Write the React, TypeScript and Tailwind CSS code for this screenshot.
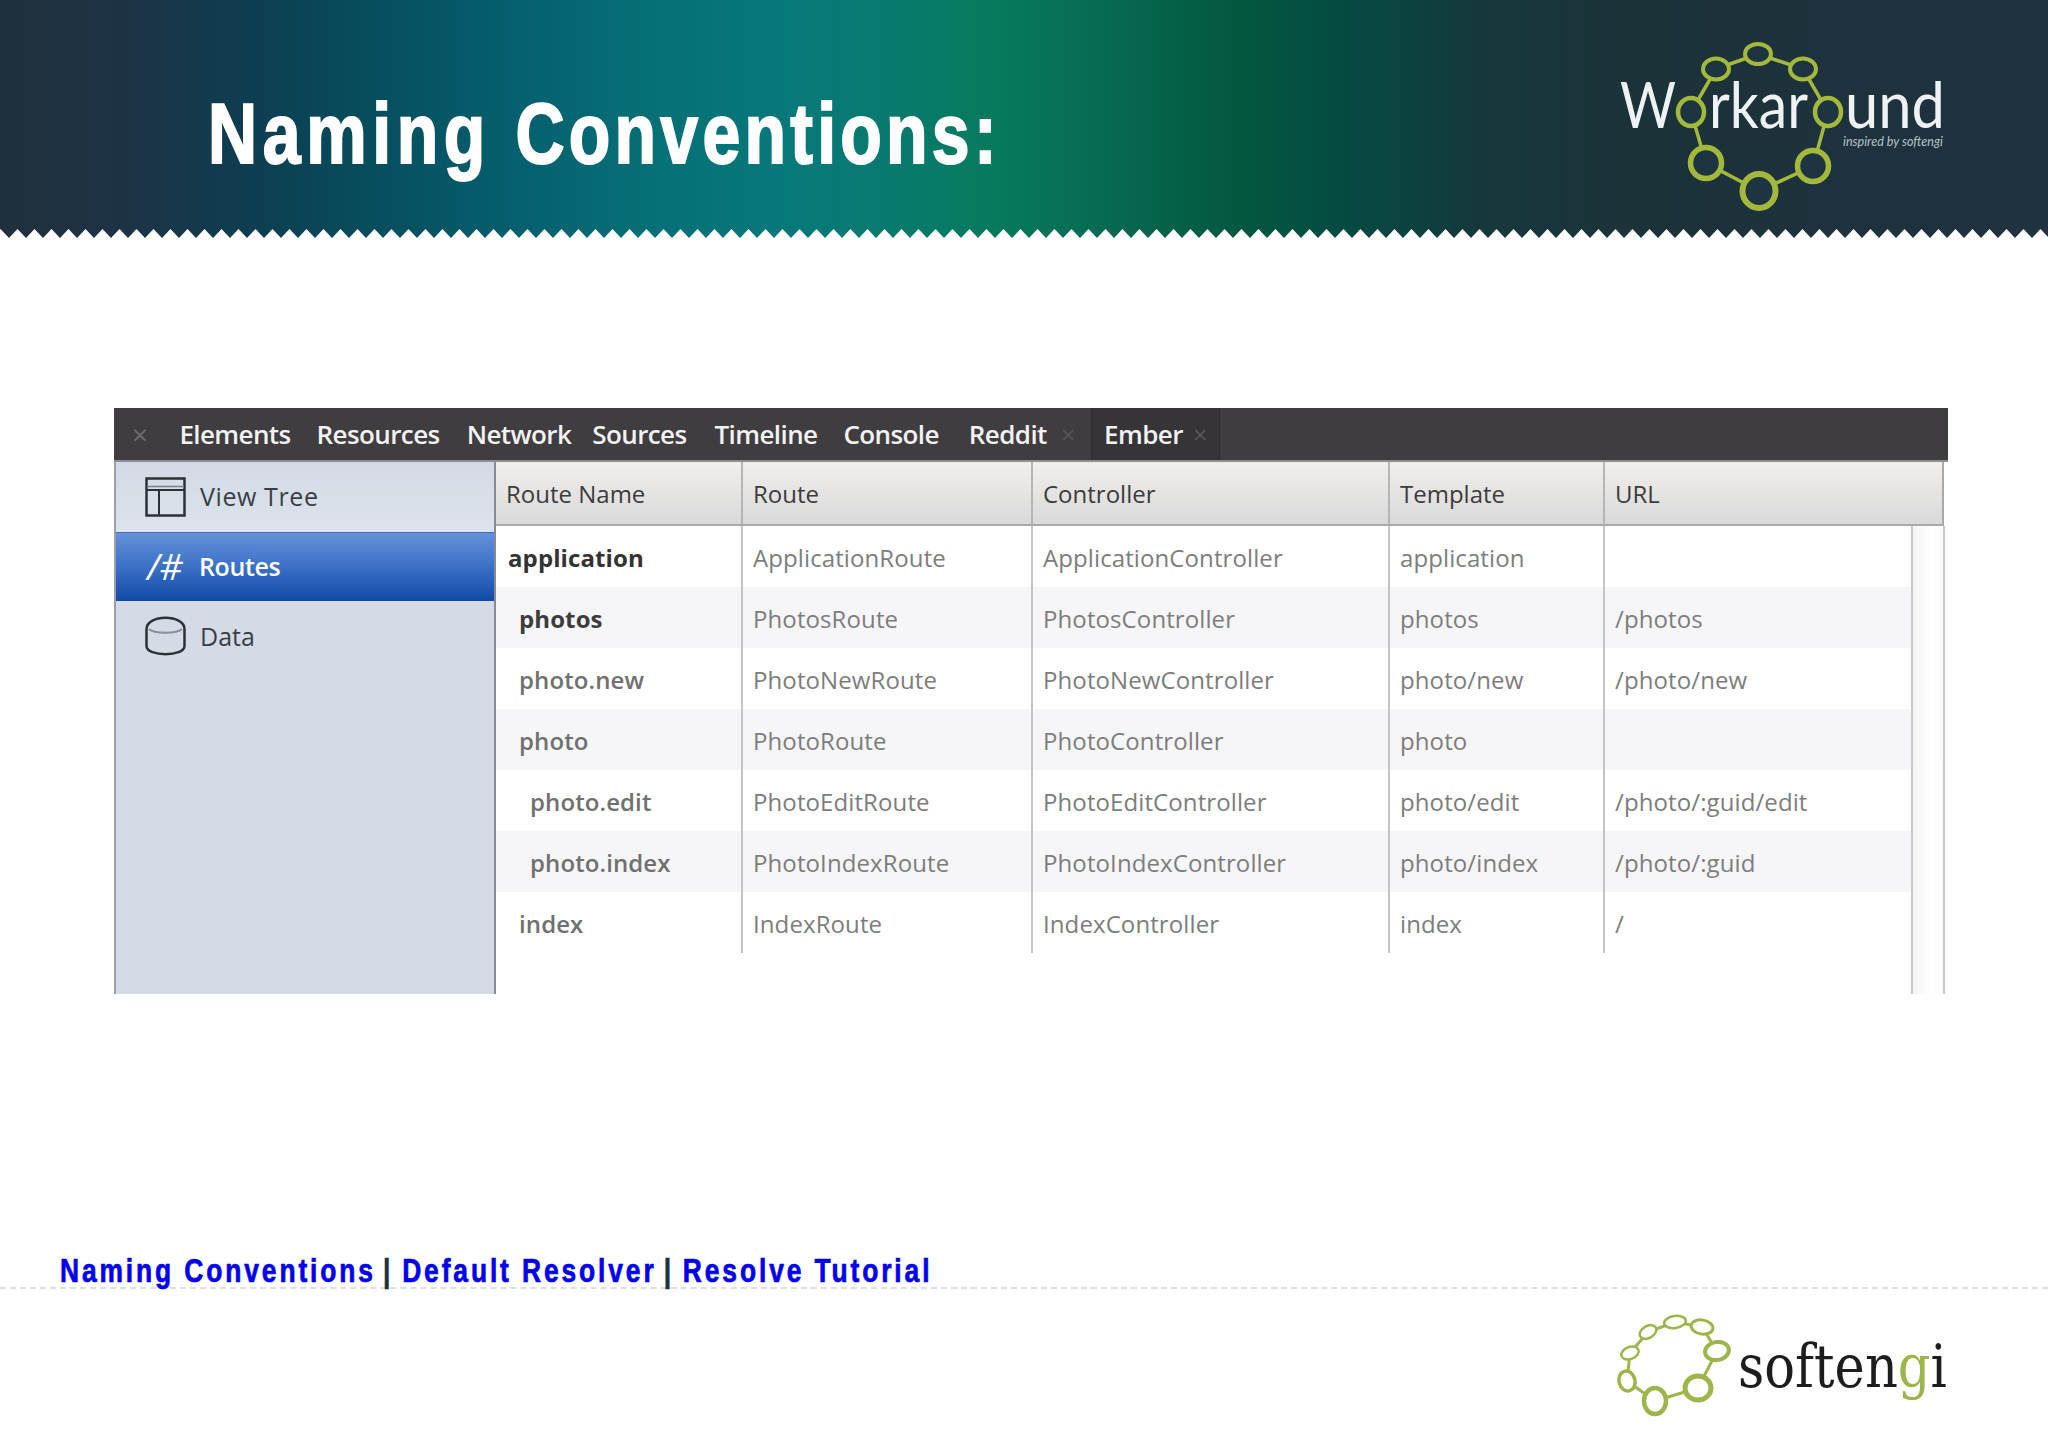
const rows: [string, string, string, string, string, number, string][] = [
  ["application", "ApplicationRoute", "ApplicationController", "application", "", 0, "font-bold text-[#333333]"],
  ["photos", "PhotosRoute", "PhotosController", "photos", "/photos", 1, "font-bold text-[#3d3d3d]"],
  ["photo.new", "PhotoNewRoute", "PhotoNewController", "photo/new", "/photo/new", 1, "font-semibold text-[#707070]"],
  ["photo", "PhotoRoute", "PhotoController", "photo", "", 1, "font-semibold text-[#707070]"],
  ["photo.edit", "PhotoEditRoute", "PhotoEditController", "photo/edit", "/photo/:guid/edit", 2, "font-semibold text-[#707070]"],
  ["photo.index", "PhotoIndexRoute", "PhotoIndexController", "photo/index", "/photo/:guid", 2, "font-semibold text-[#707070]"],
  ["index", "IndexRoute", "IndexController", "index", "/", 1, "font-semibold text-[#707070]"],
];

const tabs: [string, string][] = [
  ["Elements", "ml-[32px]"],
  ["Resources", "ml-[26px]"],
  ["Network", "ml-[27px]"],
  ["Sources", "ml-[21px]"],
  ["Timeline", "ml-[28px]"],
  ["Console", "ml-[26px]"],
  ["Reddit", "ml-[30px]"],
];

const grid = "grid grid-cols-[245px_290px_357px_215px_308px]";

function Teeth() {
  const pts: string[] = ["0,10"];
  for (let x = -8; x < 2060; x += 17) pts.push(`${x},9 ${x + 8.5},0`);
  pts.push("2060,10");
  return (
    <svg className="absolute left-0 bottom-0 block" width="2048" height="10" viewBox="0 0 2048 10">
      <polygon points={pts.join(" ")} fill="#ffffff" />
    </svg>
  );
}

function WorkaroundLogo() {
  const g = "#a4b93c";
  return (
    <svg className="block shrink-0 mr-[98px]" width="350" height="239" viewBox="1600 0 350 239">
      <polyline
        points="1758,54 1803,69 1828,112 1813,166 1759,191 1706,163 1691,112 1716,69 1758,54"
        fill="none"
        stroke={g}
        strokeWidth="3.5"
      />
      <g fill="#1d3540" stroke={g}>
        <ellipse cx="1758" cy="54" rx="13" ry="10" strokeWidth="4" />
        <ellipse cx="1716" cy="69" rx="13" ry="10.5" strokeWidth="4" />
        <ellipse cx="1803" cy="69" rx="13" ry="10.5" strokeWidth="4" />
        <ellipse cx="1691" cy="112" rx="13" ry="14" strokeWidth="4.5" />
        <ellipse cx="1828" cy="112" rx="13" ry="14" strokeWidth="4.5" />
        <ellipse cx="1706" cy="163" rx="15.5" ry="15.5" strokeWidth="5.5" />
        <ellipse cx="1813" cy="166" rx="15.5" ry="15.5" strokeWidth="5.5" />
        <ellipse cx="1759" cy="191" rx="16.5" ry="17" strokeWidth="6" />
      </g>
      <g fill="#eef2f4" fontFamily="Lato, sans-serif" fontSize="64">
        <text x="1620" y="128" textLength="56" lengthAdjust="spacingAndGlyphs">W</text>
        <text x="1709" y="128" textLength="99" lengthAdjust="spacingAndGlyphs">rkar</text>
        <text x="1845" y="128" textLength="100" lengthAdjust="spacingAndGlyphs">und</text>
      </g>
      <text x="1843" y="146" textLength="100" lengthAdjust="spacingAndGlyphs" fill="#b4c4c8" fontFamily="Lato, sans-serif" fontStyle="italic" fontSize="13">inspired by softengi</text>
    </svg>
  );
}

function SoftengiLogo() {
  const g = "#9db54a";
  return (
    <svg className="block" width="340" height="120" viewBox="1610 1300 340 120">
      <polyline
        points="1675,1322 1702,1327 1717,1351 1698,1388 1655,1401 1627,1381 1630,1353 1648,1332 1675,1322"
        fill="none"
        stroke={g}
        strokeWidth="3"
      />
      <g fill="#ffffff" stroke={g}>
        <ellipse cx="1675" cy="1322" rx="11" ry="6" strokeWidth="2.5" transform="rotate(-8 1675 1322)" />
        <ellipse cx="1648" cy="1332" rx="9" ry="6" strokeWidth="2.5" transform="rotate(-30 1648 1332)" />
        <ellipse cx="1630" cy="1353" rx="9" ry="6" strokeWidth="2.5" transform="rotate(-20 1630 1353)" />
        <ellipse cx="1702" cy="1327" rx="11" ry="7" strokeWidth="3" transform="rotate(10 1702 1327)" />
        <ellipse cx="1627" cy="1381" rx="8" ry="10" strokeWidth="3.5" transform="rotate(-15 1627 1381)" />
        <ellipse cx="1717" cy="1351" rx="12" ry="9" strokeWidth="4" transform="rotate(-10 1717 1351)" />
        <ellipse cx="1655" cy="1401" rx="11" ry="13" strokeWidth="4.5" />
        <ellipse cx="1698" cy="1388" rx="13" ry="12" strokeWidth="5" />
      </g>
      <text x="1738" y="1387" textLength="209" lengthAdjust="spacingAndGlyphs" fontFamily="'DejaVu Serif', serif" fontSize="60" fill="#1d1d1f">
        soften<tspan fill={g}>g</tspan>i
      </text>
    </svg>
  );
}

function ViewIcon() {
  return (
    <svg className="block shrink-0" width="41" height="40" viewBox="0 0 41 40" fill="none" stroke="#2c3138">
      <rect x="1.5" y="1.5" width="38" height="37" strokeWidth="2.5" />
      <path d="M2 9.5H39" strokeWidth="1.5" stroke="#7a8088" />
      <path d="M2 13H39M14 13V38" strokeWidth="2" />
    </svg>
  );
}

function DataIcon() {
  return (
    <svg className="block shrink-0" width="41" height="40" viewBox="0 0 41 40" fill="none" strokeWidth="2.5" stroke="#2c3138">
      <path d="M1.5 13C1.5 -2 39.5 -2 39.5 13V30C39.5 41 1.5 41 1.5 30Z" />
      <path d="M4 13C9 18 32 18 37 13" stroke="#8a8f98" strokeWidth="2" />
    </svg>
  );
}

export default function App() {
  return (
    <div className="relative w-[2048px] h-[1450px] bg-white overflow-hidden font-['Open_Sans',sans-serif]">
      <header className="relative flex h-[239px] justify-between bg-[linear-gradient(90deg,#20303c_0%,#1d3345_6%,#0c3f52_13%,#06505f_19%,#05606f_25.5%,#067076_32%,#06787a_38%,#077a70_43%,#077a5c_48.5%,#066a50_54%,#03573f_60.6%,#054a42_66%,#15383d_72%,#1c3239_80%,#1e3240_100%)]">
        <h1 className="ml-[208px] pt-[76px] whitespace-nowrap origin-left scale-x-[0.8] text-[85px] leading-[116px] font-bold text-white [-webkit-text-stroke:2px_white] font-['Liberation_Sans',sans-serif]">
          <span className="tracking-[7px]">Naming </span>
          <span className="tracking-[5.3px]">Conventions:</span>
        </h1>
        <WorkaroundLogo />
        <Teeth />
      </header>

      <section className="mt-[169px] ml-[114px] w-[1834px] h-[586px] flex flex-col">
        <div className="h-[52px] flex items-center bg-[#3f3d3f] text-[#f2f2f2] text-[26px] font-semibold tracking-[-0.6px]">
          <span className="ml-[18px] text-[#6d6b6d] text-[28px] font-normal">×</span>
          {tabs.map(([t, m]) => (
            <span key={t} className={m}>{t}</span>
          ))}
          <span className="ml-[14px] text-[#565456] text-[26px] font-normal">×</span>
          <div className="ml-[16px] h-full w-[129px] flex items-center bg-[#363436] border-x border-[#2e2c2e]">
            <span className="ml-[12px]">Ember</span>
            <span className="ml-[10px] text-[#565456] text-[26px] font-normal">×</span>
          </div>
        </div>

        <div className="flex flex-1 min-h-0 border-t-2 border-[#8f8f8f]">
          <aside className="w-[382px] shrink-0 bg-[#d5dbe6] border-l-2 border-r-2 border-l-[#9a9fa8] border-r-[#858a93] text-[#3a3f46] text-[25px]">
            <div className="h-[70px] flex items-center pl-[29px] gap-[14px] bg-[linear-gradient(180deg,#d3dae5,#dde3ec)]">
              <ViewIcon />
              <span className="tracking-[0.6px]">View Tree</span>
            </div>
            <div className="h-[69px] flex items-center pl-[31px] bg-[linear-gradient(180deg,#6491d9,#3f74c9_45%,#114aa6)] border-t border-[#3c6fb8] text-white font-semibold">
              <span className="w-[52px] text-[36px] italic font-normal leading-none">/#</span>
              <span className="tracking-[-0.4px]">Routes</span>
            </div>
            <div className="h-[70px] flex items-center pl-[29px] gap-[14px]">
              <DataIcon />
              <span className="pt-[2px]">Data</span>
            </div>
          </aside>

          <div className="flex-1 flex flex-col min-w-0">
            <div className={`${grid} h-[64px] w-[1448px] bg-[linear-gradient(180deg,#f1efed,#d9d9d9)] border-b-2 border-[#a9a9a9] border-r-2 text-[#3c3c3c] text-[24px]`}>
              {["Route Name", "Route", "Controller", "Template", "URL"].map((h, i) => (
                <div key={h} className={`flex items-center pt-[1px] pl-[10px] ${i === 0 ? "" : "border-l-2 border-[#b5b5b5]"}`}>{h}</div>
              ))}
            </div>
            <div className="flex flex-1 min-h-0">
              <div className="w-[1415px] shrink-0 text-[24px] text-[#7d7d7d] tracking-[0.1px]">
                {rows.map(([n, r, c, t, u, ind, cls], i) => (
                  <div key={n} className={`${grid} h-[61px] ${i % 2 === 1 ? "bg-[#f6f6f8]" : "bg-white"}`}>
                    <div className={`flex items-center pt-[2px] ${ind === 0 ? "pl-[12px]" : ind === 1 ? "pl-[23px]" : "pl-[34px]"} ${cls}`}>{n}</div>
                    {[r, c, t, u].map((v, k) => (
                      <div key={k} className="flex items-center pt-[2px] pl-[10px] border-l-2 border-[#c4c4c4]">{v}</div>
                    ))}
                  </div>
                ))}
              </div>
              <div className="w-[34px] shrink-0 border-l-2 border-r-2 border-[#c8c8c8] bg-[linear-gradient(90deg,#f4f4f6,#ffffff_60%,#fafafa)]" />
            </div>
          </div>
        </div>
      </section>

      <nav className="mt-[256px] h-[39px] border-b-2 border-dashed border-[#dcdee0] pl-[60px]">
        <div className="flex items-start whitespace-nowrap origin-left scale-x-[0.8] text-[33px] leading-[42px] font-bold tracking-[3.6px] text-[#0000ee] [-webkit-text-stroke:0.7px_#0000ee] font-['Liberation_Sans',sans-serif]">
          <span>Naming Conventions</span>
          <span className="ml-[9px] mr-[11px] text-[#17323f] [-webkit-text-stroke:0.7px_#17323f]">|</span>
          <span>Default Resolver</span>
          <span className="ml-[9px] mr-[11px] text-[#17323f] [-webkit-text-stroke:0.7px_#17323f]">|</span>
          <span>Resolve Tutorial</span>
        </div>
      </nav>

      <div className="flex justify-end pr-[98px] mt-[11px]">
        <SoftengiLogo />
      </div>
    </div>
  );
}
